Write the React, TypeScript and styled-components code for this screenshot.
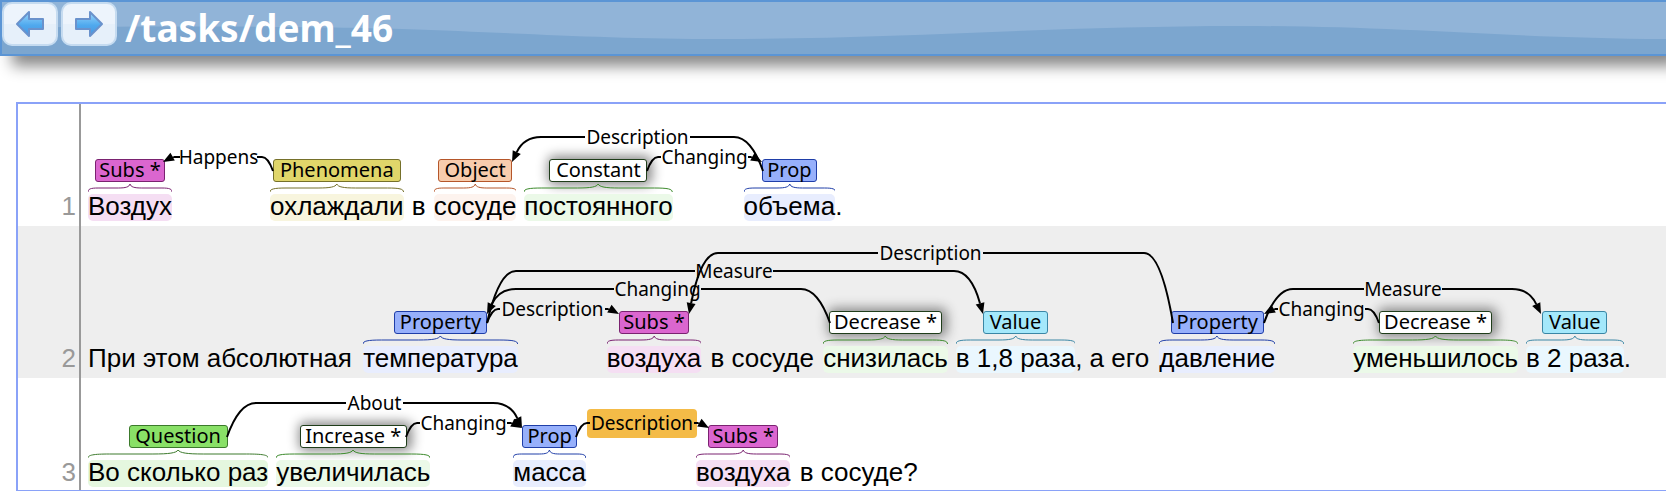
import React from 'react';
import styled, { createGlobalStyle } from 'styled-components';

const GlobalStyle = createGlobalStyle`
  * { box-sizing: border-box; }
  body {
    margin: 0;
    background: #fff;
    color: #000;
    overflow-x: hidden;
    font-family: "Noto Sans", "Open Sans", sans-serif;
  }
`;

/* ---------- palette ---------- */

type Kind = 'subs' | 'phenomena' | 'object' | 'change' | 'prop' | 'value' | 'question';

interface Paint {
  fill: string;
  edge: string;
  brace: string;
  mark: string;
}

const paints: Record<Kind, Paint> = {
  subs: { fill: '#db66cf', edge: '#7a2270', brace: '#7a2270', mark: '#f5def3' },
  phenomena: { fill: '#e0d66a', edge: '#75702a', brace: '#75702a', mark: '#f8f5de' },
  object: { fill: '#f7ccad', edge: '#b5562a', brace: '#b5562a', mark: '#fdf3ee' },
  change: { fill: '#ffffff', edge: '#1f3d1a', brace: '#3c8a2c', mark: '#ebf9e8' },
  prop: { fill: '#97b0fb', edge: '#1f3ea8', brace: '#1f3ea8', mark: '#e8edfe' },
  value: { fill: '#a4e8fb', edge: '#3a86a5', brace: '#3a86a5', mark: '#eaf7fe' },
  question: { fill: '#89e067', edge: '#3c7a2c', brace: '#3c7a2c', mark: '#e5f7df' },
};

/* ---------- header ---------- */

const Header = styled.header`
  position: relative;
  display: flex;
  align-items: flex-start;
  gap: 3px;
  height: 56px;
  border: 2px solid #5b95d5;
  border-right: 0;
  background: #91b4d8;
  box-shadow: 12px 10px 14px #888;
`;

const Wave = styled.svg`
  position: absolute;
  inset: 0;
  width: 100%;
  height: 100%;
`;

const NavButton = styled.button`
  position: relative;
  display: flex;
  align-items: center;
  justify-content: center;
  width: 56px;
  height: 44px;
  padding: 0;
  border: 2px solid #c5dbf0;
  border-radius: 10px;
  background: linear-gradient(#edf4fc 50%, #e6f0fa 50%);
  cursor: pointer;
`;

const Title = styled.h1`
  position: relative;
  margin: 0 0 0 5px;
  font-size: 37px;
  line-height: 52px;
  font-weight: 700;
  color: #fff;
  white-space: nowrap;
`;

/* ---------- document ---------- */

const Document = styled.main`
  margin: 46px 0 0 16px;
  border: 2px solid #8aa2f8;
  border-right: 0;
  border-bottom-width: 1px;
  overflow: hidden;
`;

const Sentence = styled.section<{ $headroom: number }>`
  display: flex;
  white-space: pre;
  font-family: "Liberation Sans", Arial, sans-serif;
  font-size: 26px;
  line-height: 24px;

  > * {
    padding-top: ${(p) => p.$headroom}px;
    padding-bottom: 5px;
  }
  &:nth-child(even) { background: #eee; }
  &:last-child > * { padding-bottom: 3px; }
`;

const Gutter = styled.div`
  display: flex;
  align-items: flex-end;
  justify-content: flex-end;
  flex: none;
  width: 63px;
  padding-right: 3px;
  border-right: 2px solid #999;
  color: #999;
`;

const LineNumber = styled.span`
  padding-bottom: 3px;
`;

const Line = styled.div`
  flex: 1;
  padding-left: 7px;
`;

const Tokens = styled.div`
  position: relative;
  display: flex;
  align-items: flex-end;
`;

const Token = styled.span<{ $gap: number }>`
  display: flex;
  flex-direction: column;
  align-items: center;
  flex: none;
  margin-left: ${(p) => p.$gap}px;
`;

const Tag = styled.span<{ $paint: Paint; $width: number; $raised: boolean }>`
  width: ${(p) => p.$width}px;
  height: 23px;
  border: 1px solid ${(p) => p.$paint.edge};
  border-radius: 3px;
  background: ${(p) => p.$paint.fill};
  box-shadow: ${(p) => (p.$raised ? '2px 0 12px 3px #888' : 'none')};
  font-family: "Noto Sans", "Open Sans", sans-serif;
  font-size: 20px;
  line-height: 20px;
  text-align: center;
`;

const Brace = styled.svg`
  display: block;
  width: 0;
  min-width: 100%;
  height: 9px;
  margin: 1px 0 2px;
`;

const Word = styled.span<{ $mark?: string }>`
  padding-bottom: 3px;
  border-radius: 5px;
  background: ${(p) => p.$mark ?? 'transparent'};
`;

const ArcLayer = styled.svg`
  position: absolute;
  top: 0;
  left: 0;
  width: 100%;
  height: 100%;
  overflow: visible;
  pointer-events: none;
  font-family: "Noto Sans", "Open Sans", sans-serif;
  font-size: 19px;
`;

/* ---------- data ---------- */

interface TokenData {
  text: string;
  gap?: number;
  kind?: Kind;
  label?: string;
  width?: number;
}

/* Horizontal positions count from the start of the sentence text. */
interface ArcData {
  label: string;
  level: number;
  left: number;
  right: number;
  head: 'left' | 'right';
  textStart: number;
  textEnd: number;
  highlighted?: boolean;
}

interface SentenceData {
  headroom: number;
  tokens: TokenData[];
  arcs: ArcData[];
}

const sentences: SentenceData[] = [
  {
    headroom: 55,
    tokens: [
      { text: 'Воздух', kind: 'subs', label: 'Subs *', width: 70 },
      { text: 'охлаждали', gap: 98, kind: 'phenomena', label: 'Phenomena', width: 128 },
      { text: ' в ', gap: 1 },
      { text: 'сосуде', gap: 1, kind: 'object', label: 'Object', width: 74 },
      { text: 'постоянного', gap: 8, kind: 'change', label: 'Constant', width: 98 },
      { text: 'объема', gap: 71, kind: 'prop', label: 'Prop', width: 55 },
      { text: '.' },
    ],
    arcs: [
      { label: 'Happens', level: 0, left: 75, right: 185, head: 'left', textStart: 92, textEnd: 169 },
      { label: 'Description', level: 1, left: 424, right: 675, head: 'left', textStart: 497, textEnd: 602 },
      { label: 'Changing', level: 0, left: 559, right: 674, head: 'right', textStart: 573, textEnd: 660 },
    ],
  },
  {
    headroom: 85,
    tokens: [
      { text: 'При этом абсолютная ' },
      { text: 'температура', gap: 4, kind: 'prop', label: 'Property', width: 93 },
      { text: 'воздуха', gap: 89, kind: 'subs', label: 'Subs *', width: 70 },
      { text: ' в сосуде ', gap: 2 },
      { text: 'снизилась', gap: 2, kind: 'change', label: 'Decrease *', width: 113 },
      { text: 'в 1,8 раза', gap: 8, kind: 'value', label: 'Value', width: 65 },
      { text: ', а его ' },
      { text: 'давление', gap: 3, kind: 'prop', label: 'Property', width: 93 },
      { text: 'уменьшилось', gap: 78, kind: 'change', label: 'Decrease *', width: 113 },
      { text: 'в 2 раза', gap: 8, kind: 'value', label: 'Value', width: 65 },
      { text: '.' },
    ],
    arcs: [
      { label: 'Description', level: 0, left: 399, right: 531, head: 'right', textStart: 412, textEnd: 517 },
      { label: 'Changing', level: 1, left: 399, right: 742, head: 'left', textStart: 526, textEnd: 613 },
      { label: 'Measure', level: 2, left: 399, right: 895, head: 'right', textStart: 607, textEnd: 685 },
      { label: 'Description', level: 3, left: 601, right: 1085, head: 'left', textStart: 790, textEnd: 895 },
      { label: 'Changing', level: 0, left: 1176, right: 1291, head: 'left', textStart: 1190, textEnd: 1277 },
      { label: 'Measure', level: 1, left: 1176, right: 1453, head: 'right', textStart: 1276, textEnd: 1354 },
    ],
  },
  {
    headroom: 47,
    tokens: [
      { text: 'Во сколько раз', kind: 'question', label: 'Question', width: 99 },
      { text: 'увеличилась', gap: 8, kind: 'change', label: 'Increase *', width: 107 },
      { text: 'масса', gap: 83, kind: 'prop', label: 'Prop', width: 55 },
      { text: 'воздуха', gap: 110, kind: 'subs', label: 'Subs *', width: 70 },
      { text: ' в сосуде?', gap: 2 },
    ],
    arcs: [
      { label: 'About', level: 1, left: 139, right: 434, head: 'right', textStart: 258, textEnd: 315 },
      { label: 'Changing', level: 0, left: 318, right: 434, head: 'right', textStart: 332, textEnd: 419 },
      {
        label: 'Description',
        level: 0,
        left: 488,
        right: 621,
        head: 'right',
        textStart: 502,
        textEnd: 606,
        highlighted: true,
      },
    ],
  },
];

/* ---------- arcs ---------- */

const LEVEL_Y = [-2, -22, -40, -58];

/* One leg of an arc: from the label, along its level, then down to the tag. */
function Leg({ x, dir, y, textX, head }: { x: number; dir: 1 | -1; y: number; textX: number; head: boolean }) {
  const low = y === LEVEL_Y[0];
  const bendX = x + dir * (low ? 11 : 29);
  const pullX = x + dir * (low ? 5 : 12);
  const footY = head ? 3 : 12;
  if (!head) {
    return <path d={`M${x} ${footY} Q${pullX} ${y} ${bendX} ${y} H${textX}`} />;
  }
  const dx = low ? dir * 9 : pullX - x;
  const dy = low ? -5 : y - footY;
  const length = Math.hypot(dx, dy);
  const ux = dx / length;
  const uy = dy / length;
  const baseX = x + ux * 11;
  const baseY = footY + uy * 11;
  const tri = [
    `${x},${footY}`,
    `${baseX - uy * 4.5},${baseY + ux * 4.5}`,
    `${baseX + uy * 4.5},${baseY - ux * 4.5}`,
  ].join(' ');
  return (
    <>
      <path d={`M${baseX} ${baseY} Q${low ? baseX : pullX} ${y} ${bendX} ${y} H${textX}`} />
      <polygon points={tri} fill="#000" stroke="none" />
    </>
  );
}

function Arc({ arc }: { arc: ArcData }) {
  const y = LEVEL_Y[arc.level];
  return (
    <g>
      {arc.highlighted && (
        <rect
          x={arc.textStart - 3}
          y={y - 14}
          width={arc.textEnd - arc.textStart + 6}
          height={29}
          rx={4}
          fill="#f4bb47"
        />
      )}
      <g fill="none" stroke="#000" strokeWidth={2}>
        <Leg x={arc.left} dir={1} y={y} textX={arc.textStart} head={arc.head === 'left'} />
        <Leg x={arc.right} dir={-1} y={y} textX={arc.textEnd} head={arc.head === 'right'} />
      </g>
      <text x={(arc.textStart + arc.textEnd) / 2} y={y + 7} textAnchor="middle">
        {arc.label}
      </text>
    </g>
  );
}

function TokenView({ token }: { token: TokenData }) {
  if (!token.kind) {
    return (
      <Token $gap={token.gap ?? 0}>
        <Word>{token.text}</Word>
      </Token>
    );
  }
  const paint = paints[token.kind];
  return (
    <Token $gap={token.gap ?? 0}>
      <Tag $paint={paint} $width={token.width ?? 60} $raised={token.kind === 'change'}>
        {token.label}
      </Tag>
      <Brace viewBox="0 0 100 9" preserveAspectRatio="none" aria-hidden="true">
        <path
          d="M0 9 C0 6 3 5 12 5 L36 5 C45 5 49 4 50 1 C51 4 55 5 64 5 L88 5 C97 5 100 6 100 9"
          fill="none"
          stroke={paint.brace}
          strokeWidth={1}
          vectorEffect="non-scaling-stroke"
        />
      </Brace>
      <Word $mark={paint.mark}>{token.text}</Word>
    </Token>
  );
}

function ArrowIcon({ flip }: { flip?: boolean }) {
  const id = flip ? 'arrow-next' : 'arrow-prev';
  return (
    <svg width="30" height="28" viewBox="0 0 30 28" aria-hidden="true">
      <defs>
        <linearGradient id={id} x1="0" y1="0" x2="0" y2="1">
          <stop offset="0" stopColor="#9bd6fb" />
          <stop offset="0.55" stopColor="#4fa9ee" />
          <stop offset="1" stopColor="#4a94de" />
        </linearGradient>
      </defs>
      <path
        d="M2 14 L14 2 V9 H28 V19 H14 V26 Z"
        transform={flip ? 'translate(30 0) scale(-1 1)' : undefined}
        fill={`url(#${id})`}
        stroke="#6a92cc"
        strokeWidth="2"
        strokeLinejoin="round"
      />
    </svg>
  );
}

export default function App() {
  return (
    <>
      <GlobalStyle />
      <Header>
        <Wave viewBox="0 0 1664 52" preserveAspectRatio="none" aria-hidden="true">
          <path
            d="M0 26 C120 24 300 24 400 27 C520 31 600 37 720 37 C900 37 1050 24 1240 24 C1400 24 1500 36 1664 37 V52 H0 Z"
            fill="#7ca6cf"
          />
        </Wave>
        <NavButton type="button" aria-label="Previous document">
          <ArrowIcon />
        </NavButton>
        <NavButton type="button" aria-label="Next document">
          <ArrowIcon flip />
        </NavButton>
        <Title>/tasks/dem_46</Title>
      </Header>
      <Document>
        {sentences.map((sentence, index) => (
          <Sentence key={index} $headroom={sentence.headroom}>
            <Gutter>
              <LineNumber>{index + 1}</LineNumber>
            </Gutter>
            <Line>
              <Tokens>
                {sentence.tokens.map((token, i) => (
                  <TokenView key={i} token={token} />
                ))}
                <ArcLayer>
                  {sentence.arcs.map((arc, i) => (
                    <Arc key={i} arc={arc} />
                  ))}
                </ArcLayer>
              </Tokens>
            </Line>
          </Sentence>
        ))}
      </Document>
    </>
  );
}
